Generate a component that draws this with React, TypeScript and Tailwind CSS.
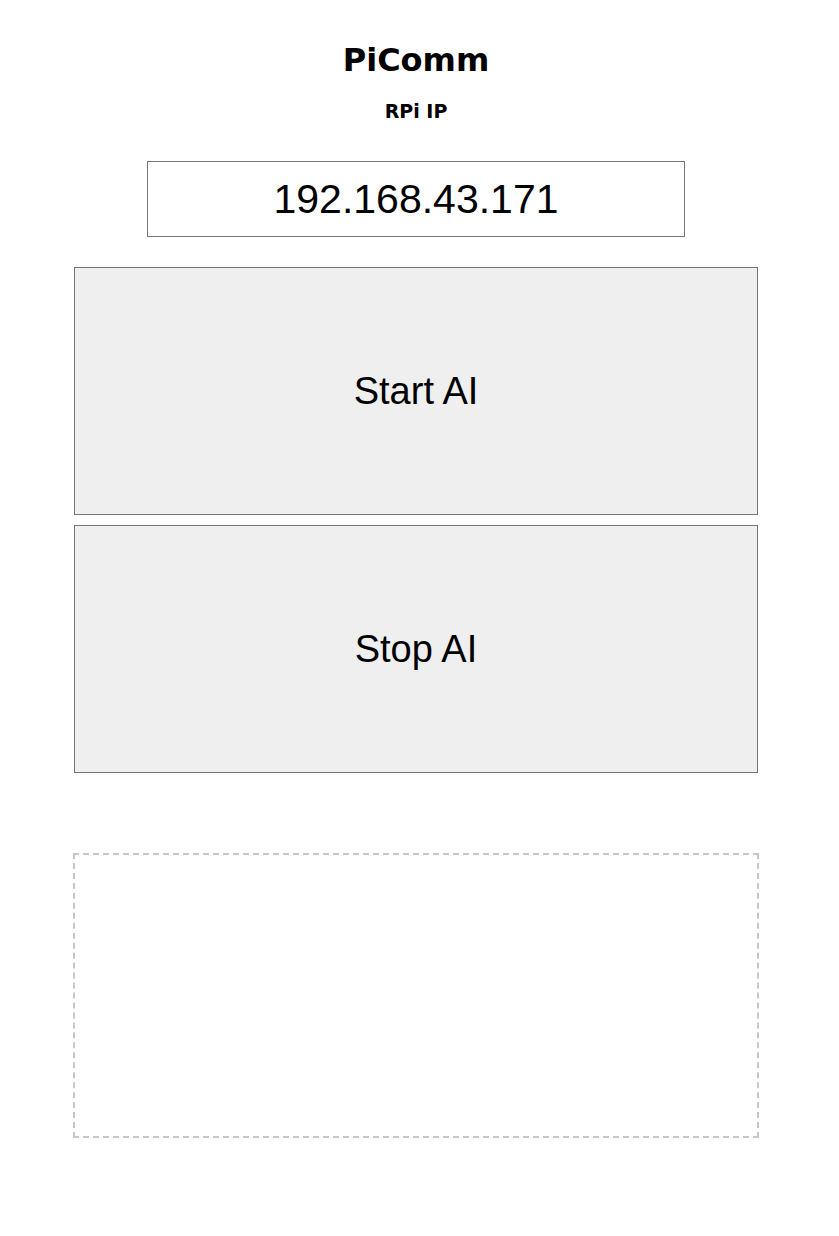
export default function App() {
  return (
    <div className="min-h-screen bg-white">
      <div className="w-[832px] flex flex-col items-center pt-[42px]">
        <h1 className="text-[32px] leading-[37px] font-bold text-black font-['DejaVu_Sans',sans-serif]">
          PiComm
        </h1>
        <h3 className="mt-[21px] text-[19px] leading-[22px] font-bold text-black font-['DejaVu_Sans',sans-serif]">
          RPi IP
        </h3>
        <input
          type="text"
          defaultValue="192.168.43.171"
          className="mt-[39px] w-[538px] h-[76px] border border-[#767676] bg-white text-center text-[41px] text-black font-['Liberation_Sans',Arial,sans-serif] outline-none"
        />
        <div className="mt-[30px] w-[684px] flex flex-col gap-[10px]">
          <button className="h-[248px] w-full bg-[#efefef] border border-[#767676] text-[38px] text-black font-['Liberation_Sans',Arial,sans-serif]">
            Start AI
          </button>
          <button className="h-[248px] w-full bg-[#efefef] border border-[#767676] text-[38px] text-black font-['Liberation_Sans',Arial,sans-serif]">
            Stop AI
          </button>
        </div>
        <div className="mt-[80px] w-[686px] h-[285px] border-2 border-dashed border-[#c8c8c8]"></div>
      </div>
    </div>
  );
}
